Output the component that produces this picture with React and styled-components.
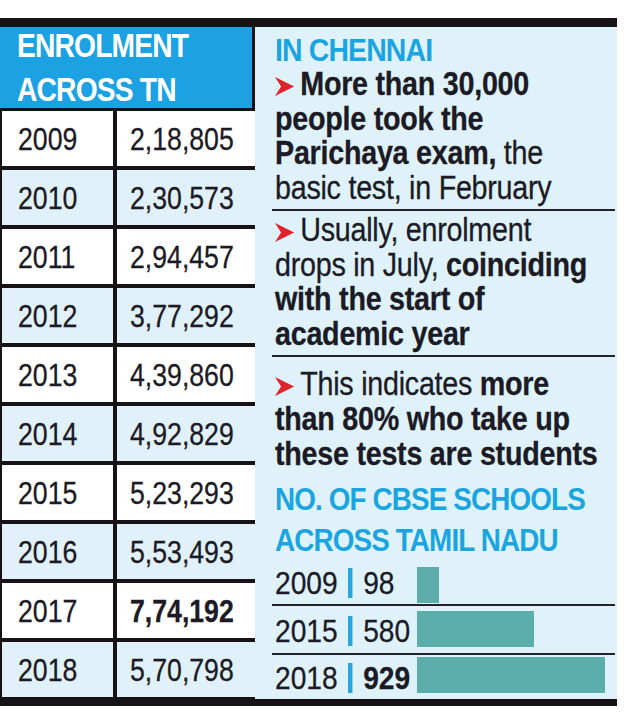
import React from 'react'
import styled, { createGlobalStyle } from 'styled-components'

const GlobalStyle = createGlobalStyle`
  body {
    margin: 0;
    background: #ffffff;
    font-family: "Liberation Sans", Arial, sans-serif;
    color: #1c1a24;
  }
`

const enrolment = [
  { year: 2009, count: '2,18,805' },
  { year: 2010, count: '2,30,573' },
  { year: 2011, count: '2,94,457' },
  { year: 2012, count: '3,77,292' },
  { year: 2013, count: '4,39,860' },
  { year: 2014, count: '4,92,829' },
  { year: 2015, count: '5,23,293' },
  { year: 2016, count: '5,53,493' },
  { year: 2017, count: '7,74,192', strong: true },
  { year: 2018, count: '5,70,798' },
]

const schools = [
  { year: 2009, count: 98 },
  { year: 2015, count: 580 },
  { year: 2018, count: 929, strong: true },
]

// newspaper type is condensed; squeeze Liberation Sans horizontally
const Squeeze = styled.div`
  width: ${p => 100 / p.$sx}%;
  transform: scaleX(${p => p.$sx});
  transform-origin: 0 0;
  white-space: nowrap;
  margin-top: ${p => p.$lift || 0}px;
`

const SqueezeInline = styled.span`
  display: inline-block;
  transform: scaleX(${p => p.$sx});
  transform-origin: 0 50%;
  white-space: nowrap;
`

const Figure = styled.div`
  width: 617px;
  margin-top: 18px;
  border-top: 9px solid #161216;
  border-bottom: 7px solid #161216;
  display: grid;
  grid-template-columns: 255px minmax(0, 1fr);
`

const LeftCol = styled.div`
  display: flex;
  flex-direction: column;
  border-right: 3px solid #161216;
`

const Header = styled.div`
  background: #1ca1e2;
  height: 81px;
  box-sizing: border-box;
  padding: 0 0 0 17px;
  color: #fff;
  font-weight: 700;
  font-size: 34px;
  line-height: 44px;
  letter-spacing: -1px;
  overflow: hidden;
`

const Table = styled.div`
  background: #161216;
  padding: 3px 0 2px 2px;
  display: grid;
  grid-template-columns: 111px 138px;
  grid-auto-rows: 55px;
  gap: 4px;
`

const Cell = styled.div`
  background: ${p => (p.$shade ? '#e1f1f9' : '#ffffff')};
  display: flex;
  align-items: center;
  padding-left: ${p => (p.$first ? '16px' : '13px')};
  padding-top: 2px;
  font-size: 31px;
  font-weight: ${p => (p.$strong ? 700 : 400)};
  -webkit-text-stroke: 0.3px #1c1a24;
`

const Panel = styled.div`
  background: #dff2fa;
  padding: 0 2px 0 17px;
  display: flex;
  flex-direction: column;
  overflow: hidden;
`

const Title = styled.div`
  color: #1ba5e0;
  font-weight: 700;
  font-size: 32px;
  line-height: ${p => p.$lh || '34px'};
  letter-spacing: -1px;
  padding: ${p => p.$pad || '0'} 0 0 3px;
  margin-bottom: ${p => p.$pull || 0}px;
`

const Note = styled.div`
  font-size: 33px;
  line-height: ${p => p.$lh || '34.5px'};
  letter-spacing: -0.3px;
  padding: ${p => p.$pad || '0 0 4px'};
  padding-left: 3px;
  border-bottom: ${p => (p.$last ? 'none' : '2px solid #23222a')};
  -webkit-text-stroke: 0.3px #1c1a24;
`

const B = styled.b`
  font-weight: 700;
`

const Arrow = styled.svg`
  width: 22px;
  height: 19px;
  margin-right: 7px;
  vertical-align: -1px;
`

const Pointer = () => (
  <Arrow viewBox="0 0 22 19" preserveAspectRatio="none">
    <polygon points="0,0 22,9.5 0,19 7,9.5" fill="#e0222b" stroke="none" />
  </Arrow>
)

const Chart = styled.div`
  display: flex;
  flex-direction: column;
  margin-top: auto;
`

const ChartRow = styled.div`
  display: flex;
  align-items: flex-end;
  height: ${p => p.$h}px;
  border-bottom: ${p => (p.$last ? 'none' : '2px solid #23222a')};
  padding-left: 3px;
`

const Label = styled.div`
  width: 142px;
  flex: none;
  align-self: center;
  font-size: 32px;
  line-height: 40px;
  padding-top: ${p => p.$top || 0}px;
  -webkit-text-stroke: 0.3px #1c1a24;
`

const LabelLine = styled.div`
  display: flex;
  align-items: center;
`

const Sep = styled.span`
  display: inline-block;
  width: 5px;
  height: 30px;
  background: #27a4dc;
  margin: 0 12px 0 12px;
`

const Count = styled.span`
  font-weight: ${p => (p.$strong ? 700 : 400)};
`

const Bar = styled.div`
  height: 36px;
  background: #5baeac;
  margin-bottom: ${p => p.$gap}px;
`

export default function App() {
  const max = Math.max(...schools.map(s => s.count))
  const heights = [42, 47, 44]
  const gaps = [1, 6, 6]
  return (
    <>
      <GlobalStyle />
      <Figure>
        <LeftCol>
          <Header>
            <Squeeze $sx={0.83} $lift={-4}>
              ENROLMENT
              <br />
              ACROSS TN
            </Squeeze>
          </Header>
          <Table>
            {enrolment.map((row, i) => (
              <React.Fragment key={row.year}>
                <Cell $first $shade={i % 2 === 1}>
                  <SqueezeInline $sx={0.86}>{row.year}</SqueezeInline>
                </Cell>
                <Cell $shade={i % 2 === 1} $strong={row.strong}>
                  <SqueezeInline $sx={0.86}>{row.count}</SqueezeInline>
                </Cell>
              </React.Fragment>
            ))}
          </Table>
        </LeftCol>
        <Panel>
          <Title $pad="6px">
            <Squeeze $sx={0.89}>IN CHENNAI</Squeeze>
          </Title>
          <Note>
            <Squeeze $sx={0.87}>
              <Pointer />
              <B>More than 30,000</B>
              <br />
              <B>people took the</B>
              <br />
              <B>Parichaya exam,</B> the
              <br />
              basic test, in February
            </Squeeze>
          </Note>
          <Note $pad="2px 0 4px">
            <Squeeze $sx={0.87}>
              <Pointer />
              Usually, enrolment
              <br />
              drops in July, <B>coinciding</B>
              <br />
              <B>with the start of</B>
              <br />
              <B>academic year</B>
            </Squeeze>
          </Note>
          <Note $last $pad="9px 0 0" $lh="35px">
            <Squeeze $sx={0.87}>
              <Pointer />
              This indicates <B>more</B>
              <br />
              <B>than 80% who take up</B>
              <br />
              <B>these tests are students</B>
            </Squeeze>
          </Note>
          <Title $lh="41px" $pad="8px" $pull={-10}>
            <Squeeze $sx={0.87}>
              NO. OF CBSE SCHOOLS
              <br />
              ACROSS TAMIL NADU
            </Squeeze>
          </Title>
          <Chart>
            {schools.map((s, i) => (
              <ChartRow key={s.year} $h={heights[i]} $last={i === schools.length - 1}>
                <Label $top={i === 0 ? 0 : 2}>
                  <Squeeze $sx={0.88}>
                    <LabelLine>
                      {s.year}
                      <Sep />
                      <Count $strong={s.strong}>{s.count}</Count>
                    </LabelLine>
                  </Squeeze>
                </Label>
                <Bar $gap={gaps[i]} style={{ width: `${Math.round((s.count / max) * 188)}px`, minWidth: '22px' }} />
              </ChartRow>
            ))}
          </Chart>
        </Panel>
      </Figure>
    </>
  )
}
